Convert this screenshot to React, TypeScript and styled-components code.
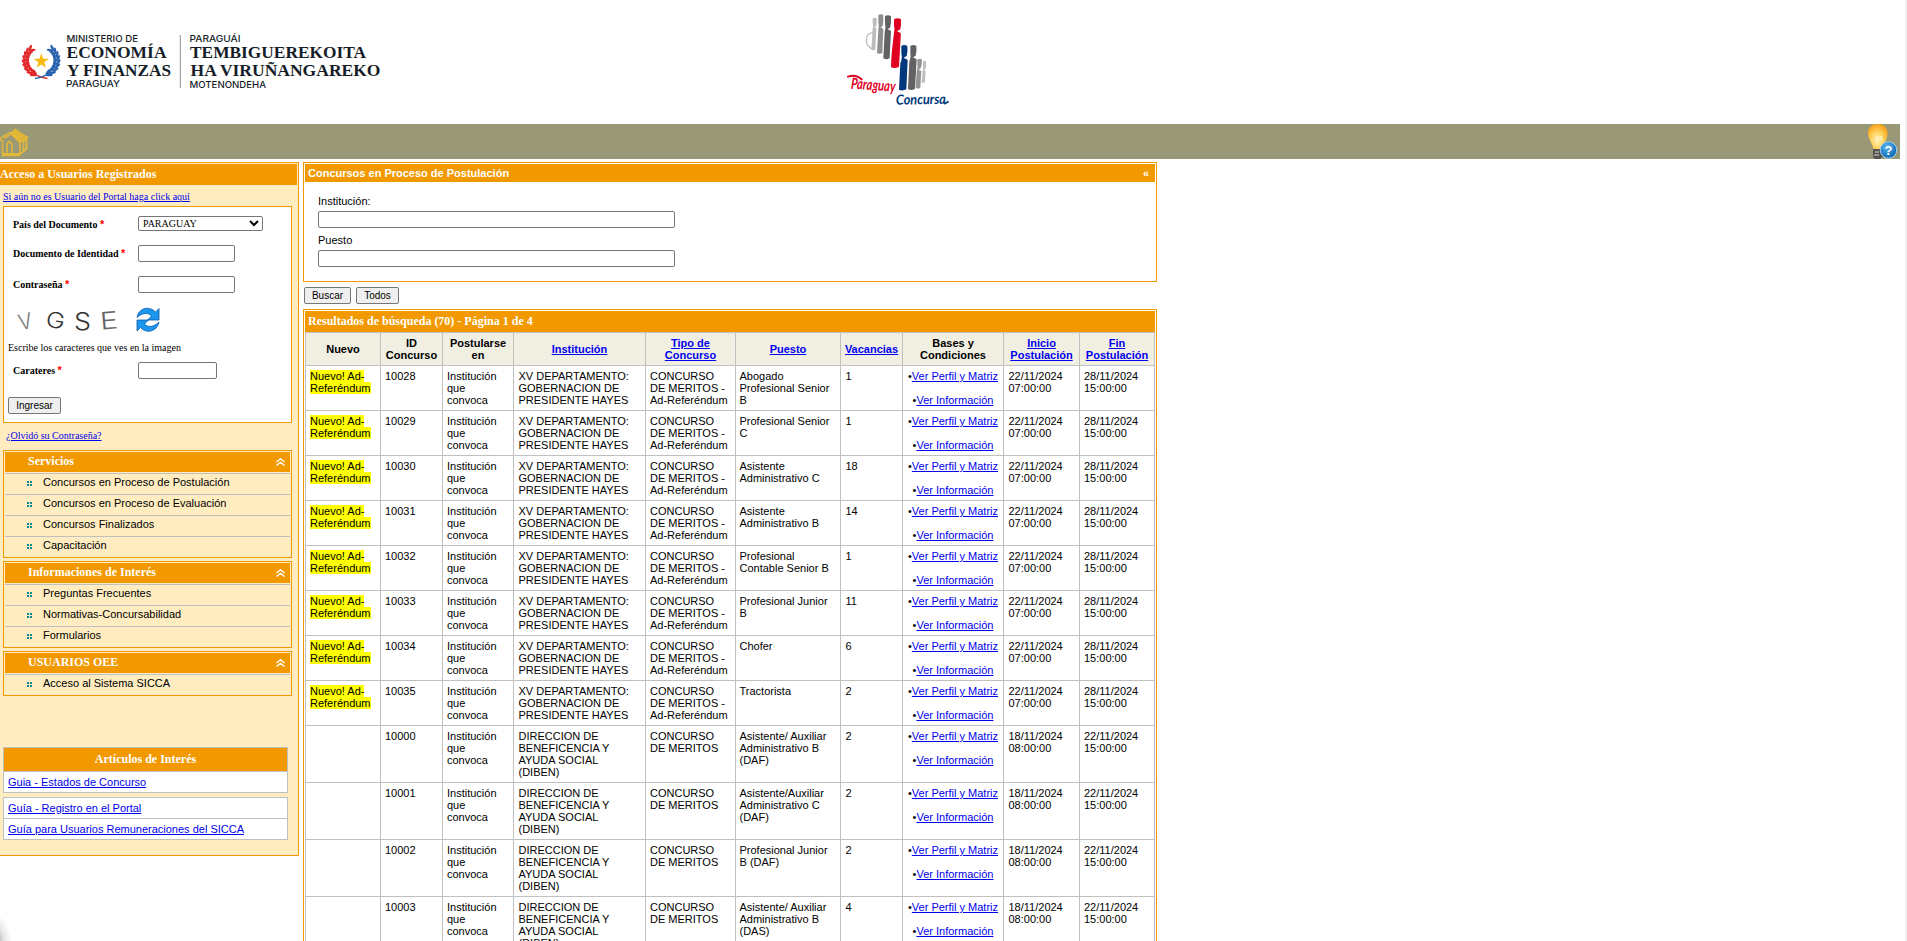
import React from 'react';
import styled, { createGlobalStyle } from 'styled-components';

const ORANGE = '#f39900';
const CREAM = '#ffedc1';
const GRAY = '#c0c0c0';
const SANS = '"Liberation Sans", Arial, sans-serif';
const SERIF = '"Liberation Serif", "Times New Roman", serif';

const GlobalStyle = createGlobalStyle`
  * { box-sizing: border-box; }
  html, body { margin: 0; height: 100%; overflow: hidden; background: #fff; }
  body { font: 11px/12px ${SANS}; color: #000; }
  a { color: #0000ee; text-decoration: underline; }
`;

const Page = styled.div`
  display: flex;
  height: 941px;
  overflow: hidden;
  position: relative;
`;
const Content = styled.div`
  flex: 1;
  min-width: 0;
`;
const ScrollGutter = styled.div`
  width: 2px;
  background: #f1f1f1;
`;
const Header = styled.header`
  display: flex;
  height: 124px;
`;
const MinistryLogo = styled.svg`
  width: 400px;
  height: 124px;
  margin-right: 420px;
`;
const ConcursaLogo = styled.svg`
  width: 160px;
  height: 124px;
`;
const Toolbar = styled.nav`
  display: flex;
  justify-content: space-between;
  width: 1900px;
  height: 35px;
  background: #999977;
`;
const Columns = styled.div`
  display: flex;
  align-items: flex-start;
  padding-top: 3px;
`;

const Sidebar = styled.aside`
  width: 299px;
  margin-right: 4px;
  padding: 1px 1px 15px 0;
  background: ${CREAM};
  border: 1px solid ${ORANGE};
  border-left: 0;
`;
const SidebarTitle = styled.h2`
  margin: 0;
  height: 21px;
  background: ${ORANGE};
  color: #fff;
  font: bold 12px/20px ${SERIF};
`;
const SerifLink = styled.a<{ $margin: string }>`
  display: block;
  width: max-content;
  margin: ${p => p.$margin};
  font: 10px/11px ${SERIF};
`;
const LoginForm = styled.form`
  width: 289px;
  height: 217px;
  margin-left: 3px;
  background: #fff;
  border: 1px solid ${ORANGE};
`;
const Field = styled.div<{ $top: number }>`
  display: flex;
  align-items: flex-start;
  margin-top: ${p => p.$top}px;
  padding-left: 9px;
`;
const FieldLabel = styled.label`
  width: 125px;
  height: 14px;
  padding-top: 3px;
  white-space: nowrap;
  font: bold 10px/11px ${SERIF};
  span { color: #ff0000; font: bold 11px/10px ${SANS}; }
`;
const TextInput = styled.input<{ $width: number }>`
  display: block;
  width: ${p => p.$width}px;
  height: 17px;
  padding: 1px 2px;
  border: 1px solid #767676;
  border-radius: 2px;
  background: #fff;
  font: 10px ${SANS};
`;
const CountrySelect = styled.div`
  display: flex;
  align-items: center;
  justify-content: space-between;
  width: 125px;
  height: 15px;
  padding: 0 3px 0 4px;
  border: 1px solid #767676;
  border-radius: 2px;
  font: 10px/13px ${SERIF};
`;
const CaptchaRow = styled.div`
  display: flex;
  height: 32px;
  margin: 11px 0 0 4px;
  svg { display: block; }
`;
const CaptchaHint = styled.p`
  margin: 6px 0 0 4px;
  font: 10px/11px ${SERIF};
`;
const Button = styled.button<{ $width: number }>`
  display: block;
  width: ${p => p.$width}px;
  height: 17px;
  padding: 0;
  border: 1px solid #767676;
  border-radius: 2px;
  background: #efefef;
  color: #000;
  font: 10px/15px ${SANS};
`;
const SubmitRow = styled.div`
  margin: 18px 0 0 4px;
`;

const MenuBox = styled.section`
  width: 289px;
  margin: 0 0 3px 3px;
  padding: 1px 1px 0;
  border: 1px solid ${ORANGE};
`;
const MenuHeader = styled.h3`
  display: flex;
  justify-content: space-between;
  height: 20px;
  margin: 0 0 1px;
  padding: 0 5px 0 23px;
  background: ${ORANGE};
  color: #fff;
  font: bold 12px/18px ${SERIF};
  svg { margin-top: 6px; }
`;
const MenuItem = styled.div`
  display: flex;
  height: 21px;
  padding: 2px 0 0 22px;
  border-top: 1px solid ${GRAY};
  svg { margin: 5px 11px 0 0; }
`;

const Articles = styled.section`
  width: 285px;
  margin: 51px 0 0 3px;
`;
const ArticleTitle = styled.h3`
  height: 24px;
  margin: 0;
  border: 1px solid ${GRAY};
  border-bottom: 0;
  background: ${ORANGE};
  color: #fff;
  text-align: center;
  font: bold 12px/22px ${SERIF};
`;
const ArticleGroup = styled.div`
  margin-bottom: 4px;
  border: 1px solid ${GRAY};
  border-top: 0;
  background: #fff;
  &:last-child { margin-bottom: 0; }
`;
const ArticleRow = styled.div`
  height: 21px;
  padding: 4px;
  border-top: 1px solid ${GRAY};
`;

const Main = styled.main`
  width: 854px;
`;
const Panel = styled.section`
  padding: 1px;
  border: 1px solid ${ORANGE};
`;
const FilterPanel = styled(Panel)`
  height: 120px;
`;
const PanelTitle = styled.h2`
  display: flex;
  justify-content: space-between;
  height: 18px;
  margin: 0;
  padding: 3px 6px 0 3px;
  background: ${ORANGE};
  color: #fff;
  font: bold 11px/12px ${SANS};
`;
const ResultsTitle = styled.h2`
  height: 21px;
  margin: 0;
  padding-left: 3px;
  background: ${ORANGE};
  color: #fff;
  font: bold 12px/20px ${SERIF};
`;
const FilterFields = styled.div`
  display: grid;
  padding: 13px 13px 0;
`;
const FilterLabel = styled.label`
  height: 16px;
`;
const FilterInput = styled(TextInput)`
  margin-bottom: 6px;
`;
const Actions = styled.div`
  display: flex;
  gap: 5px;
  padding: 5px 1px;
`;
const Table = styled.table`
  display: block;
  width: 850px;
  border-right: 1px solid ${GRAY};
  border-bottom: 1px solid ${GRAY};
  thead, tbody { display: block; }
`;
const Row = styled.tr`
  display: grid;
  grid-template-columns: 75px 62px 71px 132px 90px 105px 62px 101px 76px 75px;
`;
const HeadCell = styled.th`
  display: flex;
  align-items: center;
  justify-content: center;
  height: 33px;
  padding: 0 4px;
  border: 0 solid ${GRAY};
  border-width: 1px 0 0 1px;
  background: #f1efe2;
  text-align: center;
  line-height: 12px;
`;
const Cell = styled.td<{ $center?: boolean }>`
  padding: 4px;
  border: 0 solid ${GRAY};
  border-width: 1px 0 0 1px;
  text-align: ${p => (p.$center ? 'center' : 'left')};
  white-space: ${p => (p.$center ? 'nowrap' : 'normal')};
  &:nth-child(4), &:nth-child(7), &:nth-child(9) { padding-left: 4.5px; }
  &:nth-child(6) { padding-left: 3.5px; }
`;
const Badge = styled.span`
  background: #ffff00;
`;
const CornerShadow = styled.div`
  position: absolute;
  left: -30px;
  bottom: -30px;
  width: 42px;
  height: 58px;
  background: radial-gradient(closest-side, #c4c4c4 40%, rgba(215, 215, 215, 0.6) 65%, rgba(255, 255, 255, 0));
`;

const leaf = (x: number, y: number, angle: number, color: string, key: string) => (
  <ellipse key={key} cx={x} cy={y} rx="3.4" ry="1.3" fill={color} transform={`rotate(${angle} ${x} ${y})`} />
);

const Laurel = ({ side, color }: { side: 1 | -1; color: string }) => {
  const leaves: React.ReactNode[] = [];
  for (let i = 0; i < 9; i++) {
    const degrees = 62 - i * 14;
    const t = (degrees * Math.PI) / 180;
    for (const r of [14, 17.2]) {
      const x = 41.2 + side * r * Math.cos(t);
      const y = 60.5 + r * Math.sin(t) * 0.95;
      const tangent = degrees - 90 + (r > 15 ? 28 : -28);
      leaves.push(leaf(x, y, side === 1 ? tangent : 180 - tangent, color, `${i}-${r}`));
    }
  }
  return (
    <g>
      {leaves}
      <path
        d={side === 1 ? 'M35 78.5Q44 77 50 73' : 'M47.5 78.500Q38 77 31 72'}
        fill="none" stroke={color} strokeWidth="1.300"
      />
    </g>
  );
};

const Ministry = () => (
  <MinistryLogo viewBox="0 0 400 124">
    <Laurel side={-1} color="#e3282c" />
    <Laurel side={1} color="#2a63ae" />
    <path d="M41.3 53.3l1.8 5.4 5.7.1-4.6 3.4 1.7 5.5-4.6-3.3-4.600 3.300 1.700-5.500-4.600-3.400 5.700-.1z" fill="#f8b90e" />
    <g fill="#151d28" fontFamily='"Inter", sans-serif' fontSize="9.2" fontWeight="500">
      <text x="66.500" y="41.500" textLength="71.500" lengthAdjust="spacingAndGlyphs">MINISTERIO DE</text>
      <text x="66" y="87" textLength="54" lengthAdjust="spacingAndGlyphs">PARAGUAY</text>
      <text x="189.500" y="41.500" textLength="51" lengthAdjust="spacingAndGlyphs">PARAGUÁI</text>
      <text x="189.500" y="87.700" textLength="76.500" lengthAdjust="spacingAndGlyphs">MOTENONDEHA</text>
    </g>
    <g fill="#151d28" fontFamily='"Liberation Serif", serif' fontSize="17.300" fontWeight="700">
      <text x="66.500" y="58" textLength="100" lengthAdjust="spacingAndGlyphs">ECONOMÍA</text>
      <text x="67" y="76" textLength="104" lengthAdjust="spacingAndGlyphs">Y FINANZAS</text>
      <text x="190" y="58" textLength="176" lengthAdjust="spacingAndGlyphs">TEMBIGUEREKOITA</text>
      <text x="190.500" y="76" textLength="190" lengthAdjust="spacingAndGlyphs">HA VIRUÑANGAREKO</text>
    </g>
    <path d="M180.300 35v53" stroke="#8b8f94" />
  </MinistryLogo>
);

const Concursa = () => (
  <ConcursaLogo viewBox="0 0 480 372">
    <path d="M162 97Q139 98 139 119Q139 138 158 148" fill="none" stroke="#bdbdbf" strokeWidth="4" />
    <path d="M158 55Q164 51 170 55Q171 68 169 77L163 81L169 85L166 149Q160 153 154 149L158 86Q161 78 158 68z" fill="#bdbdbf" />
    <path d="M175 45Q182 40 190 45Q191 65 188 78L182 82L190 87L187 158Q180 164 171 159L175 90Q178 80 175 66z" fill="#8e8e91" />
    <path d="M195 48Q204 43 213 48Q214 70 210 83L203 87L213 93L209 174Q200 181 190 175L194 96Q198 84 195 68z" fill="#626265" />
    <path d="M222 58Q232 52 243 58Q244 75 241 88L231 94L242 99Q243 104 242 112L237 200Q226 207 213 202Q213 180 216 150L222 98Q225 88 222 76z" fill="#df001f" />
    <path d="M244 138Q253 132 262 138Q264 155 260 168L251 173L263 180L259 268Q248 274 237 269L241 190Q248 176 244 158z" fill="#00387c" />
    <path d="M271 138Q280 132 289 138Q291 155 287 167L279 172L290 178L285 266Q275 273 264 267L268 186Q274 172 271 158z" fill="#626265" />
    <path d="M292 179Q299 174 306 179Q306 195 302 205L296 209L304 213L301 263Q294 268 287 263L290 214Q294 204 292 194z" fill="#949496" />
    <path d="M309 185Q314 180 318 185Q319 198 316 208L312 211L317 214L315 246Q310 251 305 247L308 214Q311 204 309 196z" fill="#bdbdbf" />
    <text x="92" y="266" fill="#df001f" fontFamily='"Lato", cursive' fontStyle="italic" fontWeight="700" fontSize="46" textLength="134" lengthAdjust="spacingAndGlyphs" transform="rotate(4 92 266)">Paraguay</text>
    <path d="M84 230Q107 222 125 238" fill="none" stroke="#df001f" strokeWidth="6" strokeLinecap="round" />
    <text x="228" y="314" fill="#00387c" fontFamily='"Lato", cursive' fontStyle="italic" fontWeight="700" fontSize="42" textLength="150" lengthAdjust="spacingAndGlyphs" transform="rotate(-1 228 314)">Concursa</text>
    <path d="M374 311l10-6" stroke="#00387c" strokeWidth="5" strokeLinecap="round" />
  </ConcursaLogo>
);

const HomeIcon = () => (
  <svg width="30" height="35" viewBox="0 0 30 35">
    <defs>
      <pattern id="dots" width="2" height="2" patternUnits="userSpaceOnUse">
        <rect width="2" height="2" fill="#cfa83c" /><circle cx="1" cy="1" r=".8" fill="#f8c530" />
      </pattern>
    </defs>
    <path d="M9.500 9.500L14 5.500L15.500 4L17 6L28.500 13L27 16.500L20.500 18.500z" fill="url(#dots)" />
    <g fill="none" stroke="#efbd2e" strokeWidth="1.800" strokeDasharray="1.600 .4">
      <path d="M.5 17V14L10 8.500L20 18.500M2.500 16V30H20V17M7 30V20L9.500 17.500L12 20V30M20 30L26.500 25V16" />
      <path d="M4 14l6-3M23.500 17v10M2 31.300h18" />
    </g>
  </svg>
);

const HelpIcon = () => (
  <svg width="34" height="35" viewBox="0 0 34 35">
    <defs>
      <radialGradient id="bulb" cx=".48" cy=".62" r=".6">
        <stop offset="0" stopColor="#fff3b8" /><stop offset=".5" stopColor="#ffd463" /><stop offset="1" stopColor="#f9a51b" />
      </radialGradient>
      <radialGradient id="ball" cx=".4" cy=".3" r=".7">
        <stop offset="0" stopColor="#58b5ec" /><stop offset="1" stopColor="#0c68b4" />
      </radialGradient>
    </defs>
    <path d="M12 0C5 0 1.800 4.500 2 10c.2 6 5 9 5.500 16h9C17 19 21.500 16 21.600 10 21.800 4.500 18.500 0 12 0z" fill="url(#bulb)" />
    <path d="M10 17l1-5 2 2 2-2 1 5" fill="none" stroke="#fff8d0" />
    <path d="M7 25h10v7l-3 3H9l-2-2z" fill="#55534e" />
    <path d="M9 28h4M8 31h5" stroke="#d8d8d8" />
    <circle cx="22.500" cy="26" r="8.300" fill="url(#ball)" stroke="#a6d2ef" />
    <text x="22.500" y="31" textAnchor="middle" fontFamily="Liberation Sans" fontSize="13" fontWeight="700" fill="#fff">?</text>
  </svg>
);

const Captcha = () => (
  <svg width="124" height="32" viewBox="0 0 124 32" fontFamily='"Inter", sans-serif' fontWeight="300">
    <text x="10" y="25" fontSize="22" fill="#777" transform="rotate(-12 18 16)" textLength="14" lengthAdjust="spacingAndGlyphs">V</text>
    <text x="38" y="24" fontSize="22" fill="#333" transform="rotate(8 46 16)" textLength="19" lengthAdjust="spacingAndGlyphs">G</text>
    <text x="66" y="26" fontSize="24" fill="#333" textLength="17" lengthAdjust="spacingAndGlyphs">S</text>
    <text x="92" y="25" fontSize="24" fill="#666" transform="rotate(-5 100 16)" textLength="18" lengthAdjust="spacingAndGlyphs">E</text>
  </svg>
);

const RefreshIcon = () => (
  <svg width="32" height="32" viewBox="0 0 32 32" fill="#1c97ee" stroke="#0c5ba9" strokeWidth=".8">
    <path d="M5 13.500C7 3 18 2 23.500 8L27 4.500V16H15.500l4-4C16 8 10 9 5 13.500z" />
    <path d="M27 18C25 28 14 30 8.500 23.500L5 27V16h11.500l-4 4C16 24 22 23 27 18z" />
  </svg>
);

const CollapseIcon = () => (
  <svg width="9" height="8" viewBox="0 0 9 8" fill="none" stroke="#fff" strokeWidth="1.400">
    <path d="M.5 4L4.500 .8L8.500 4M.5 7.500L4.500 4.300L8.500 7.500" />
  </svg>
);

const BulletIcon = () => (
  <svg width="5" height="5" viewBox="0 0 5 5" fill="#078a8d">
    <path d="M0 0h2v2H0zM3 0h2v2H3zM0 3h2v2H0zM3 3h2v2H3z" />
  </svg>
);

const Menu = ({ title, items }: { title: string; items: string[] }) => (
  <MenuBox>
    <MenuHeader>{title}<CollapseIcon /></MenuHeader>
    {items.map(item => <MenuItem key={item}><BulletIcon />{item}</MenuItem>)}
  </MenuBox>
);

const Required = ({ children }: { children: React.ReactNode }) => (
  <FieldLabel>{children} <span>*</span></FieldLabel>
);

const HAYES = 'XV DEPARTAMENTO: GOBERNACION DE PRESIDENTE HAYES';
const DIBEN = 'DIRECCION DE BENEFICENCIA Y AYUDA SOCIAL (DIBEN)';

type Contest = { id: number; post: string; openings: number; isNew: boolean };
const contests: Contest[] = [
  { id: 10028, post: 'Abogado Profesional Senior B', openings: 1, isNew: true },
  { id: 10029, post: 'Profesional Senior C', openings: 1, isNew: true },
  { id: 10030, post: 'Asistente Administrativo C', openings: 18, isNew: true },
  { id: 10031, post: 'Asistente Administrativo B', openings: 14, isNew: true },
  { id: 10032, post: 'Profesional Contable Senior B', openings: 1, isNew: true },
  { id: 10033, post: 'Profesional Junior B', openings: 11, isNew: true },
  { id: 10034, post: 'Chofer', openings: 6, isNew: true },
  { id: 10035, post: 'Tractorista', openings: 2, isNew: true },
  { id: 10000, post: 'Asistente/ Auxiliar Administrativo B (DAF)', openings: 2, isNew: false },
  { id: 10001, post: 'Asistente/Auxiliar Administrativo C (DAF)', openings: 2, isNew: false },
  { id: 10002, post: 'Profesional Junior B (DAF)', openings: 2, isNew: false },
  { id: 10003, post: 'Asistente/ Auxiliar Administrativo B (DAS)', openings: 4, isNew: false },
];

const headings: { text: string; sortable: boolean }[] = [
  { text: 'Nuevo', sortable: false },
  { text: 'ID Concurso', sortable: false },
  { text: 'Postularse en', sortable: false },
  { text: 'Institución', sortable: true },
  { text: 'Tipo de Concurso', sortable: true },
  { text: 'Puesto', sortable: true },
  { text: 'Vacancias', sortable: true },
  { text: 'Bases y Condiciones', sortable: false },
  { text: 'Inicio Postulación', sortable: true },
  { text: 'Fin Postulación', sortable: true },
];

const ContestRow = ({ c }: { c: Contest }) => (
  <Row>
    <Cell>{c.isNew && <Badge>Nuevo! Ad-<br />Referéndum</Badge>}</Cell>
    <Cell>{c.id}</Cell>
    <Cell>Institución que convoca</Cell>
    <Cell>{c.isNew ? HAYES : DIBEN}</Cell>
    <Cell>CONCURSO DE MERITOS{c.isNew && <> -<br />Ad-Referéndum</>}</Cell>
    <Cell>{c.post}</Cell>
    <Cell>{c.openings}</Cell>
    <Cell $center>•<a href="#perfil">Ver Perfil y Matriz</a><br /><br />•<a href="#info">Ver Información</a></Cell>
    <Cell>{c.isNew ? '22/11/2024 07:00:00' : '18/11/2024 08:00:00'}</Cell>
    <Cell>{c.isNew ? '28/11/2024 15:00:00' : '22/11/2024 15:00:00'}</Cell>
  </Row>
);

export default function App() {
  return (
    <Page>
      <GlobalStyle />
      <Content>
        <Header><Ministry /><Concursa /></Header>
        <Toolbar><HomeIcon /><HelpIcon /></Toolbar>
        <Columns>
          <Sidebar>
            <SidebarTitle>Acceso a Usuarios Registrados</SidebarTitle>
            <SerifLink href="#registro" $margin="6px 0 4px 3px">Si aún no es Usuario del Portal haga click aquí</SerifLink>
            <LoginForm>
              <Field $top={9}>
                <Required>País del Documento</Required>
                <CountrySelect>
                  PARAGUAY
                  <svg width="10" height="7" viewBox="0 0 10 7" fill="none" stroke="#000" strokeWidth="2">
                    <path d="M1 1l4 4 4-4" />
                  </svg>
                </CountrySelect>
              </Field>
              <Field $top={14}><Required>Documento de Identidad</Required><TextInput $width={97} /></Field>
              <Field $top={14}><Required>Contraseña</Required><TextInput $width={97} type="password" /></Field>
              <CaptchaRow><Captcha /><RefreshIcon /></CaptchaRow>
              <CaptchaHint>Escribe los caracteres que ves en la imagen</CaptchaHint>
              <Field $top={9}><Required>Carateres</Required><TextInput $width={79} /></Field>
              <SubmitRow><Button type="button" $width={53}>Ingresar</Button></SubmitRow>
            </LoginForm>
            <SerifLink href="#clave" $margin="7px 0 9px 6px">¿Olvidó su Contraseña?</SerifLink>
            <Menu title="Servicios" items={['Concursos en Proceso de Postulación', 'Concursos en Proceso de Evaluación', 'Concursos Finalizados', 'Capacitación']} />
            <Menu title="Informaciones de Interés" items={['Preguntas Frecuentes', 'Normativas-Concursabilidad', 'Formularios']} />
            <Menu title="USUARIOS OEE" items={['Acceso al Sistema SICCA']} />
            <Articles>
              <ArticleTitle>Artículos de Interés</ArticleTitle>
              <ArticleGroup>
                <ArticleRow><a href="#estados">Guia - Estados de Concurso</a></ArticleRow>
              </ArticleGroup>
              <ArticleGroup>
                <ArticleRow><a href="#portal">Guía - Registro en el Portal</a></ArticleRow>
                <ArticleRow><a href="#sicca">Guía para Usuarios Remuneraciones del SICCA</a></ArticleRow>
              </ArticleGroup>
            </Articles>
          </Sidebar>
          <Main>
            <FilterPanel>
              <PanelTitle>Concursos en Proceso de Postulación<span>«</span></PanelTitle>
              <FilterFields>
                <FilterLabel>Institución:</FilterLabel>
                <FilterInput $width={357} />
                <FilterLabel>Puesto</FilterLabel>
                <FilterInput $width={357} />
              </FilterFields>
            </FilterPanel>
            <Actions>
              <Button $width={47}>Buscar</Button>
              <Button $width={43}>Todos</Button>
            </Actions>
            <Panel>
              <ResultsTitle>Resultados de búsqueda (70) - Página 1 de 4</ResultsTitle>
              <Table cellSpacing={0}>
                <thead>
                  <Row>
                    {headings.map(h => (
                      <HeadCell key={h.text}>{h.sortable ? <a href="#orden">{h.text}</a> : h.text}</HeadCell>
                    ))}
                  </Row>
                </thead>
                <tbody>{contests.map(c => <ContestRow key={c.id} c={c} />)}</tbody>
              </Table>
            </Panel>
          </Main>
        </Columns>
      </Content>
      <ScrollGutter />
      <CornerShadow />
    </Page>
  );
}
